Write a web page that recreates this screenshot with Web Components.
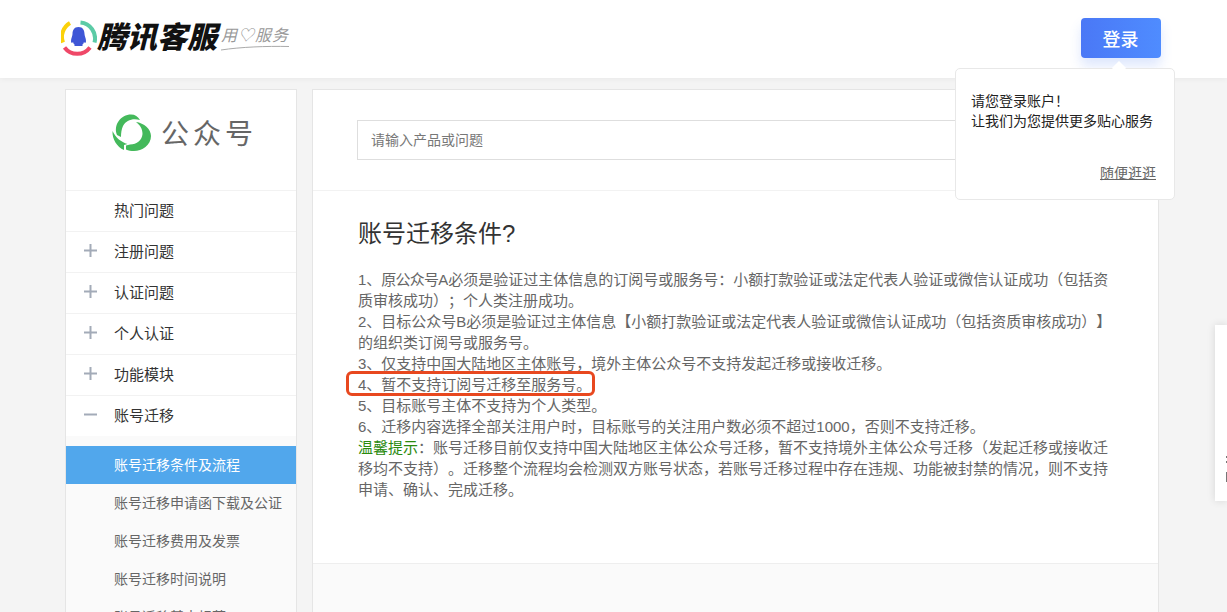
<!DOCTYPE html>
<html lang="zh-CN">
<head>
<meta charset="utf-8">
<title>腾讯客服</title>
<style>
    html, body {
        margin: 0;
        height: 100%;
        overflow: hidden;
        background: #f4f4f4;
        font-family: "Liberation Sans", "Noto Sans CJK SC", sans-serif;
        text-spacing-trim: space-all;
        text-autospace: no-autospace;
    }
</style>
</head>
<body>
<kf-header></kf-header>
<kf-login-tip></kf-login-tip>
<kf-float-bar></kf-float-bar>
<kf-page>
    <kf-sidebar slot="side">
        <kf-nav-item>热门问题</kf-nav-item>
        <kf-nav-item icon="plus">注册问题</kf-nav-item>
        <kf-nav-item icon="plus">认证问题</kf-nav-item>
        <kf-nav-item icon="plus">个人认证</kf-nav-item>
        <kf-nav-item icon="plus">功能模块</kf-nav-item>
        <kf-nav-item icon="minus">账号迁移</kf-nav-item>
        <kf-sub-list>
            <kf-sub-item active>账号迁移条件及流程</kf-sub-item>
            <kf-sub-item>账号迁移申请函下载及公证</kf-sub-item>
            <kf-sub-item>账号迁移费用及发票</kf-sub-item>
            <kf-sub-item>账号迁移时间说明</kf-sub-item>
            <kf-sub-item>账号迁移基本规范</kf-sub-item>
        </kf-sub-list>
    </kf-sidebar>
    <kf-main slot="main">
        <kf-article heading="账号迁移条件?">
            1、<span style="letter-spacing:-.75px">原公众号</span>A必须是验证过主体信息的订阅号或服务号：小额打款验证或法定代表人验证或微信认证成功（包括资<br>
            质审核成功）；个人类注册成功。<br>
            2、目标公众号B必须是验证过主体信息【小额打款验证或法定代表人验证或微信认证成功（包括资质审核成功）】的组织类订阅号或服务号。<br>
            3、仅支持中国大陆地区主体账号，境外主体公众号不支持发起迁移或接收迁移。<br>
            <kf-mark>4、暂不支持订阅号迁移至服务号。</kf-mark><br>
            5、目标账号主体不支持为个人类型。<br>
            6、迁移内容选择全部关注用户时，目标账号的关注用户数必须不超过1000，否则不支持迁移。<br>
            <kf-tip>温馨提示</kf-tip>：账号迁移目前仅支持中国大陆地区主体公众号迁移，暂不支持境外主体公众号迁移（发起迁移或接收迁<br>
            移均不支持）。迁移整个流程均会检测双方账号状态，若账号迁移过程中存在违规、功能被封禁的情况，则不支持申请、确认、完成迁移。
        </kf-article>
    </kf-main>
</kf-page>

<template id="kf-header">
    <style>
        :host {
            display: flex;
            align-items: center;
            justify-content: space-between;
            height: 78px;
            padding: 0 66px 2px 61px;
            box-sizing: border-box;
            background: #fff;
            box-shadow: 0 1px 6px rgba(0, 0, 0, .05);
            position: relative;
        }
        .logo {
            display: flex;
            align-items: center;
        }
        .name {
            font-size: 30px;
            line-height: 40px;
            font-weight: 900;
            font-style: italic;
            color: #111;
            white-space: nowrap;
        }
        .slogan {
            position: relative;
            margin-left: 4px;
            padding-bottom: 5px;
            font-size: 16px;
            line-height: 20px;
            font-style: italic;
            color: #999;
            white-space: nowrap;
            letter-spacing: 1px;
        }
        .slogan svg {
            position: absolute;
            left: 0;
            bottom: 0;
        }
        button {
            width: 80px;
            height: 40px;
            border: 0;
            padding: 0 1px 0 0;
            border-radius: 4px;
            background: linear-gradient(90deg, #4a78f6, #4f8cff);
            box-shadow: 0 8px 12px rgba(74, 120, 246, .18);
            color: #fff;
            font: 500 18px "Liberation Sans", "Noto Sans CJK SC", sans-serif;
        }
    </style>
    <div class="logo">
        <svg width="36" height="36" viewBox="0 0 36 36">
            <path d="M9 3A16 16 0 0 0 2 22.500" fill="none" stroke="#fbd109" stroke-width="4"/>
            <path d="M19.500 2.500A16 16 0 0 1 33.500 22.500" fill="none" stroke="#5ccba6" stroke-width="4"/>
            <path d="M3.500 27.500A16 16 0 0 0 29 27.500" fill="none" stroke="#ef4868" stroke-width="4"/>
            <path d="M17.500 7C13 7 11.500 10.500 11.500 14C11.500 16 10 18 10 21C10 23 11 23.500 12 22C12.500 23.500 13 24.500 14 25L13 26H22L21 25C22 24.500 22.500 23.500 23 22C24 23.500 25 23 25 21C25 18 23.500 16 23.500 14C23.500 10.500 22 7 17.500 7Z" fill="#3f56d6"/>
        </svg>
        <span class="name">腾讯客服</span>
        <span class="slogan">用♡服务<svg width="68" height="6" viewBox="0 0 68 6"><path d="M0 5C20 2 45 1 68 1.500" fill="none" stroke="#aaa" stroke-width="1"/></svg></span>
    </div>
    <button type="button">登录</button>
</template>

<template id="kf-login-tip">
    <style>
        :host {
            display: block;
            position: absolute;
            z-index: 5;
            left: 955px;
            top: 68px;
            width: 220px;
            height: 132px;
            box-sizing: border-box;
            padding: 22px 15px 0;
            background: #fff;
            border: 1px solid #e8e8e8;
            border-radius: 5px;
            font-size: 14px;
            line-height: 20px;
            color: #222;
        }
        :host::before {
            content: "";
            position: absolute;
            left: 158px;
            top: -6px;
            width: 10px;
            height: 10px;
            background: #fff;
            transform: rotate(45deg);
        }
        a {
            position: absolute;
            right: 18px;
            bottom: 16px;
            color: #666;
            text-decoration: underline;
        }
    </style>
    <div>请您登录账户！<br>让我们为您提供更多贴心服务</div>
    <a>随便逛逛</a>
</template>

<template id="kf-float-bar">
    <style>
        :host {
            display: block;
            position: absolute;
            z-index: 4;
            left: 1215px;
            top: 325px;
            width: 12px;
            height: 176px;
            background: #fff;
            box-shadow: 0 0 8px rgba(0, 0, 0, .12);
            overflow: hidden;
        }
        i {
            position: absolute;
            left: 11px;
            width: 1px;
            background: #777;
        }
    </style>
    <i style="top:131px;height:2px"></i>
    <i style="top:136px;height:2px"></i>
    <i style="top:147px;height:10px"></i>
</template>

<template id="kf-page">
    <style>
        :host {
            display: flex;
            align-items: stretch;
            gap: 15px;
            padding: 11px 0 0 65px;
        }
    </style>
    <slot name="side"></slot>
    <slot name="main"></slot>
</template>

<template id="kf-sidebar">
    <style>
        :host {
            display: block;
            width: 232px;
            height: 700px;
            box-sizing: border-box;
            background: #fff;
            border: 1px solid #e5e5e5;
            border-bottom: 0;
            flex: none;
        }
        .brand {
            display: flex;
            align-items: center;
            gap: 10px;
            height: 100px;
            box-sizing: border-box;
            padding: 0 0 16px 46px;
            font-size: 28px;
            letter-spacing: 4px;
            color: #666;
        }
    </style>
    <div class="brand">
        <svg width="39" height="37" viewBox="0 0 39 37">
            <path d="M5 21C1 11 9 .5 19 .5C23 .5 26 2.500 28 6C21 4 14 6 11 12C9.500 15 9 19 9 23Z" fill="#44b95b"/>
            <path d="M24 8C32 9 39 15 39 22C39 31 30 37 22 37C19 37 16.500 36.500 14 35.500L14 31.500L18 30.500C25 30.500 30 26 30.500 20C30.700 15 28 11 24 8Z" fill="#44b95b"/>
            <path d="M.500 17C0 25 5 33 12 36L12 31L15.500 30C9 28 4 24 .500 17Z" fill="#44b95b"/>
        </svg>
        <span>公众号</span>
    </div>
    <slot></slot>
</template>

<template id="kf-nav-item">
    <style>
        :host {
            display: flex;
            align-items: center;
            height: 41px;
            box-sizing: border-box;
            padding-bottom: 4px;
            border-top: 1px solid #f2f2f2;
            font-size: 15px;
            color: #333;
        }
        .ico {
            width: 48px;
            flex: none;
            display: flex;
            padding-left: 18px;
            box-sizing: border-box;
        }
    </style>
    <span class="ico"></span>
    <slot></slot>
</template>

<template id="kf-sub-list">
    <style>
        :host {
            display: block;
            padding: 10px 0;
            background: #fafafa;
        }
    </style>
    <slot></slot>
</template>

<template id="kf-sub-item">
    <style>
        :host {
            display: block;
            height: 38px;
            padding-left: 48px;
            font-size: 14px;
            line-height: 38px;
            color: #666;
            white-space: nowrap;
        }
        :host([active]) {
            background: #51a7ec;
            color: #fff;
        }
    </style>
    <slot></slot>
</template>

<template id="kf-main">
    <style>
        :host {
            display: block;
            width: 847px;
            height: 700px;
            box-sizing: border-box;
            background: #fff;
            border: 1px solid #e5e5e5;
            border-bottom: 0;
            flex: none;
        }
        .search {
            height: 101px;
            box-sizing: border-box;
            padding: 30px 44px 0;
            border-bottom: 1px solid #f2f2f2;
        }
        input {
            display: block;
            width: 100%;
            height: 40px;
            box-sizing: border-box;
            padding: 0 13px;
            border: 1px solid #dedede;
            outline: 0;
            font: 14px "Liberation Sans", "Noto Sans CJK SC", sans-serif;
        }
        input::placeholder {
            color: #777;
            opacity: 1;
        }
        .foot {
            height: 300px;
            background: #fafafa;
            border-top: 1px solid #eee;
        }
    </style>
    <div class="search"><input placeholder="请输入产品或问题"></div>
    <slot></slot>
    <div class="foot"></div>
</template>

<template id="kf-article">
    <style>
        :host {
            display: block;
            height: 372px;
            box-sizing: border-box;
            padding: 25px 43px 0 45px;
        }
        h1 {
            margin: 0 0 17px;
            font-size: 24px;
            line-height: 36px;
            font-weight: 400;
            color: #333;
        }
        .body {
            font-size: 15px;
            line-height: 21px;
            color: #666;
        }
    </style>
    <h1></h1>
    <div class="body"><slot></slot></div>
</template>

<template id="kf-mark"><style>
        :host {
            display: inline-block;
            position: relative;
        }
        :host::after {
            content: "";
            position: absolute;
            left: -12px;
            right: -4px;
            top: -3px;
            height: 25px;
            border: 3px solid #e8481f;
            border-radius: 6px;
            box-sizing: border-box;
        }
    </style><slot></slot></template>

<!-- no whitespace round the slot: this host is inline, a stray space would show -->
<template id="kf-tip"><style>
        :host {
            display: inline;
            color: #2a8a0e;
        }
    </style><slot></slot></template>

<script>
    // every element just stamps its own template into an open shadow root
    class KfElement extends HTMLElement {
        constructor() {
            super();
            var shadow = this.attachShadow({mode: 'open'});
            shadow.appendChild(document.getElementById(this.localName).content.cloneNode(true));
        }
    }

    class KfNavItem extends KfElement {
        connectedCallback() {
            var icon = this.getAttribute('icon');
            if (!icon) return;
            var d = icon == 'plus' ? 'M0 6.500H13M6.500 0V13' : 'M0 6.500H13';
            this.shadowRoot.querySelector('.ico').innerHTML =
                `<svg width="13" height="13" viewBox="0 0 13 13"><path d="${d}" fill="none" stroke="#a3abb8" stroke-width="2"/></svg>`;
        }
    }

    class KfArticle extends KfElement {
        connectedCallback() {
            this.shadowRoot.querySelector('h1').textContent = this.getAttribute('heading');
        }
    }

    ['kf-header', 'kf-login-tip', 'kf-float-bar', 'kf-page', 'kf-sidebar', 'kf-sub-list',
     'kf-sub-item', 'kf-main', 'kf-mark', 'kf-tip'].forEach(function (name) {
        customElements.define(name, class extends KfElement {});
    });
    customElements.define('kf-nav-item', KfNavItem);
    customElements.define('kf-article', KfArticle);
</script>
</body>
</html>
